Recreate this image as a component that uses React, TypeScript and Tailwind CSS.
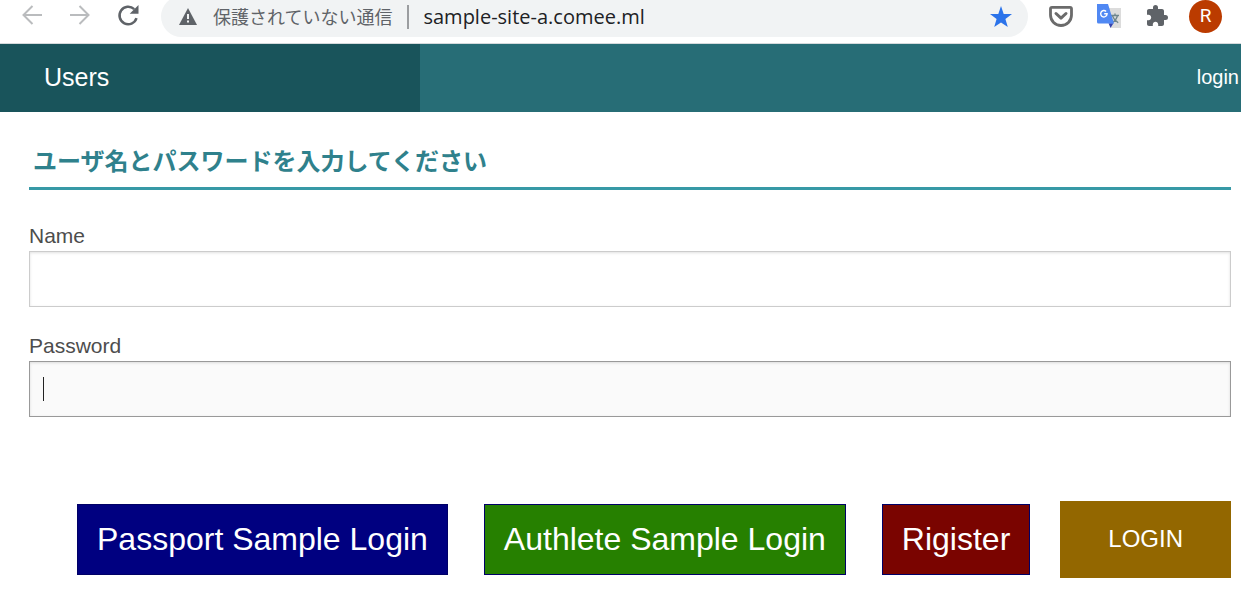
import type { ReactNode } from "react";

type FieldProps = {
  id: string;
  label: string;
  type: string;
  inputClass: string;
  children?: ReactNode;
};

function Field({ id, label, type, inputClass, children }: FieldProps) {
  return (
    <div className="flex flex-col">
      <label htmlFor={id} className="text-[21px] leading-[30px] text-[#4d4d4d]">
        {label}
      </label>
      <div className="relative flex">
        <input
          id={id}
          type={type}
          className={`h-14 w-full border px-3 text-[21px] shadow-[inset_0_1px_3px_rgba(0,0,0,0.12)] outline-none ${inputClass}`}
        />
        {children}
      </div>
    </div>
  );
}

function BrowserBar() {
  return (
    <div className="flex h-11 items-start overflow-hidden border-b border-[#d5dadc] bg-white text-[#5f6368]">
      <button type="button" aria-label="Back" className="ml-5 h-8 w-6 text-[#babcbe]">
        <svg viewBox="0 0 24 32" className="h-8 w-6" fill="none" stroke="currentColor" strokeWidth="2">
          <path d="M22 15H3.5M12.5 6 3.5 15l9 9" />
        </svg>
      </button>
      <button type="button" aria-label="Forward" className="ml-6 h-8 w-6 text-[#babcbe]">
        <svg viewBox="0 0 24 32" className="h-8 w-6" fill="none" stroke="currentColor" strokeWidth="2">
          <path d="M2 15h18.500M11.500 6l9 9-9 9" />
        </svg>
      </button>
      <button type="button" aria-label="Reload" className="ml-6 h-8 w-6">
        <svg viewBox="0 0 24 32" className="h-8 w-6">
          <path d="M20.500 18.200A8.700 8.700 0 1 1 18.200 9.200" fill="none" stroke="currentColor" strokeWidth="2.500" />
          <path d="M22.500 5v8.800h-8.800z" fill="currentColor" />
        </svg>
      </button>
      <div className="-mt-1 ml-[21px] flex h-[41px] min-w-0 flex-1 items-center rounded-full bg-[#f1f3f4] pl-[18px] pr-[15px]">
        <svg viewBox="0 0 18 17" className="h-[17px] w-[18px] shrink-0" aria-hidden="true">
          <path d="M9 0 18 17H0z" fill="#5f6368" />
          <path d="M8 6h2v5H8zM8 12.500h2v2H8z" fill="#f1f3f4" />
        </svg>
        <span className="ml-4 whitespace-nowrap pb-0.5 font-['Noto_Sans_CJK_JP',sans-serif] text-[18px] leading-7">
          保護されていない通信
        </span>
        <span className="ml-[15px] h-6 w-0.5 shrink-0 bg-[#9b9da0]" />
        <span className="ml-3.5 flex-1 whitespace-nowrap font-['Open_Sans',sans-serif] text-[20px] leading-7 text-[#202124]">
          sample-site-a.comee.ml
        </span>
        <button type="button" aria-label="Bookmark" className="h-6 w-6">
          <svg viewBox="0 0 24 24" className="h-6 w-6" fill="#2b73ea">
            <path d="m12 1 2.700 7.900 8.300.200-6.600 5 2.400 8L12 17.400 5.200 22.100l2.400-8L1 9.100l8.300-.200z" />
          </svg>
        </button>
      </div>
      <div className="ml-[21px] mr-[19px] flex h-8 items-center gap-6">
        <button type="button" aria-label="Pocket" className="h-6 w-6">
          <svg viewBox="0 0 24 24" className="h-6 w-6" fill="none" stroke="#6b6b6b">
            <path d="M3 3.300h18q1.500 0 1.500 1.500V11A10.500 10.500 0 0 1 1.500 11V4.800Q1.500 3.300 3 3.300z" strokeWidth="2.800" />
            <path d="m7 9.500 5 4.700 5-4.700" strokeWidth="3" strokeLinecap="round" strokeLinejoin="round" />
          </svg>
        </button>
        <button type="button" aria-label="Translate" className="h-6 w-6">
          <svg viewBox="0 0 24 24" className="h-6 w-6">
            <path d="M11 4h13v20H14z" fill="#dcdcdc" />
            <path d="M14 11.500h8M18 9.500v2M20.500 11.500c-.7 3-2.500 5.500-5.500 7.200M15.500 12c1 3 3.200 5 5.700 6.700" fill="none" stroke="#6d858c" strokeWidth="1.300" />
            <path d="M11.500 19.200h5L13.500 24z" fill="#3644ad" />
            <path d="M0 0h11l6 19.500H1.500Q0 19.500 0 18z" fill="#5088f3" />
            <path d="M7.200 9.800h2.900a3.200 3.200 0 1 1-1-2.400" fill="none" stroke="#fff" strokeWidth="1.400" />
          </svg>
        </button>
        <button type="button" aria-label="Extensions" className="h-6 w-6">
          <svg viewBox="0 0 24 24" className="h-6 w-6" fill="currentColor">
            <path d="M20.500 11H19V7c0-1.100-.9-2-2-2h-4V3.500a2.500 2.500 0 0 0-5 0V5H4c-1.100 0-1.990.9-1.990 2v3.800H3.500c1.490 0 2.700 1.210 2.700 2.700s-1.210 2.700-2.700 2.700H2V20c0 1.100.9 2 2 2h3.800v-1.500c0-1.490 1.210-2.700 2.700-2.700 1.490 0 2.700 1.210 2.700 2.700V22H17c1.100 0 2-.9 2-2v-4h1.500a2.500 2.500 0 0 0 0-5z" />
          </svg>
        </button>
        <button
          type="button"
          aria-label="Profile"
          className="-ml-1 h-[33px] w-[33px] shrink-0 rounded-full bg-[#bb3b00] font-[Roboto,sans-serif] text-[19px] leading-8 text-white"
        >
          R
        </button>
      </div>
    </div>
  );
}

const actions = [
  { label: "Passport Sample Login", className: "bg-[#000080]" },
  { label: "Authlete Sample Login", className: "ml-9 bg-[#268000]" },
  { label: "Rigister", className: "ml-9 bg-[#7a0400]" },
];

export default function App() {
  return (
    <div className="min-h-screen bg-white font-['Liberation_Sans',Arial,sans-serif]">
      <BrowserBar />
      <header className="flex h-[68px] items-center bg-[#276d76] text-white">
        <h1 className="flex h-full w-[420px] items-center bg-[#19545b] pb-0.5 pl-11 text-[25px] leading-8">
          Users
        </h1>
        <a href="#login" className="ml-auto pb-0.5 pr-0.5 text-[20px] leading-7">
          login
        </a>
      </header>
      <main className="pl-[29px] pr-2.5">
        <h2 className="mt-6 border-b-[3px] border-[#3799a6] px-1 pb-[9px] pt-1.5 font-['Noto_Sans_CJK_JP',sans-serif] text-[24px] font-bold leading-9 text-[#2f818c]">
          ユーザ名とパスワードを入力してください
        </h2>
        <form className="mt-[31px]" onSubmit={(event) => event.preventDefault()}>
          <div className="flex flex-col gap-6">
            <Field id="name" label="Name" type="text" inputClass="border-[#cccccc] bg-white" />
            <Field id="password" label="Password" type="password" inputClass="border-[#999999] bg-[#fafafa]">
              <span className="pointer-events-none absolute left-3.5 top-4 h-6 w-px bg-[#222222]" />
            </Field>
          </div>
          <div className="mt-[84px] flex items-center justify-end whitespace-nowrap text-white">
            {actions.map((action) => (
              <button
                key={action.label}
                type="button"
                className={`h-[71px] border border-[#000066] px-[19px] pb-0.5 text-[32px] leading-9 ${action.className}`}
              >
                {action.label}
              </button>
            ))}
            <button type="submit" className="ml-[30px] h-[77px] bg-[#936700] px-12 pb-0.5 text-[24px] leading-8">
              LOGIN
            </button>
          </div>
        </form>
      </main>
    </div>
  );
}
